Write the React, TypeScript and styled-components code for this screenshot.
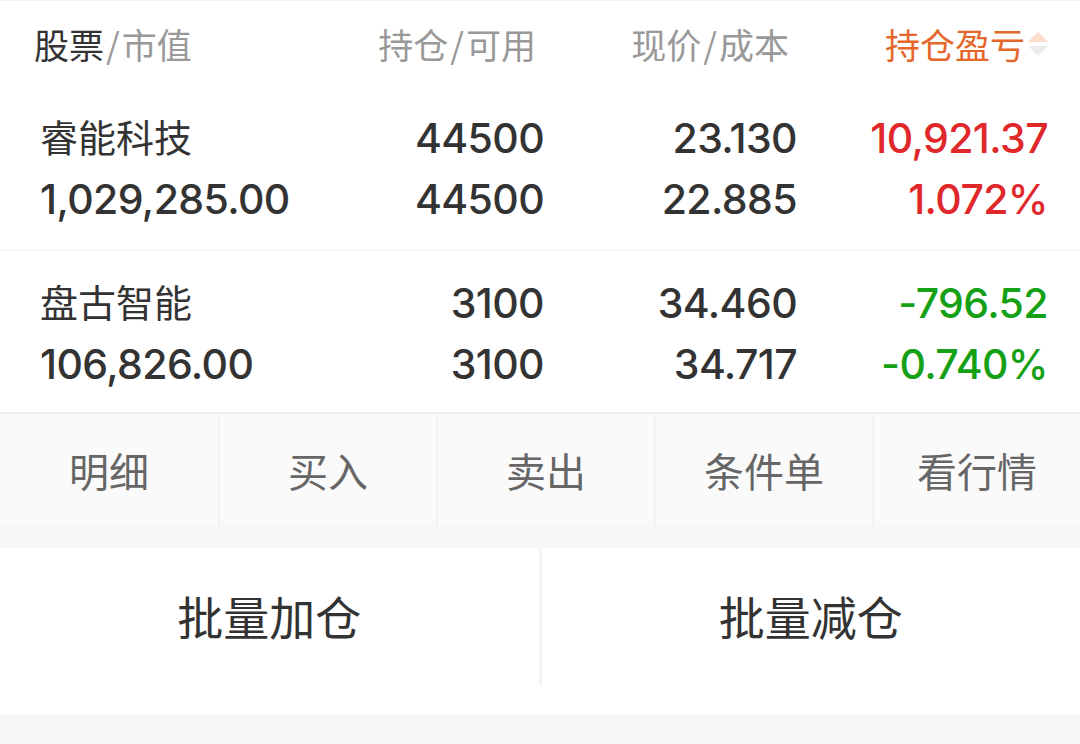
import styled, { createGlobalStyle } from "styled-components";

interface IPosition {
  name: string;
  marketValue: string;
  hold: string;
  available: string;
  price: string;
  cost: string;
  profit: string;
  profitRate: string;
  isUp: boolean;
}

const positions: IPosition[] = [
  {
    name: "睿能科技",
    marketValue: "1,029,285.00",
    hold: "44500",
    available: "44500",
    price: "23.130",
    cost: "22.885",
    profit: "10,921.37",
    profitRate: "1.072%",
    isUp: true,
  },
  {
    name: "盘古智能",
    marketValue: "106,826.00",
    hold: "3100",
    available: "3100",
    price: "34.460",
    cost: "34.717",
    profit: "-796.52",
    profitRate: "-0.740%",
    isUp: false,
  },
];

const actions = ["明细", "买入", "卖出", "条件单", "看行情"];

const GlobalStyle = createGlobalStyle`
  html, body {
    margin: 0;
    padding: 0;
    background: #f5f6f8;
  }
  body {
    font-family: "Noto Sans CJK SC", "Noto Sans", sans-serif;
    color: #333;
  }
`;

const Page = styled.div`
  width: 1080px;
  height: 744px;
  background: #f5f6f8;
  overflow: hidden;
`;

const Panel = styled.div`
  background: #fff;
  border-top: 1px solid #f2f3f5;
`;

const Grid = styled.div`
  display: grid;
  grid-template-columns: 1fr 250px 253px 251px;
  padding: 0 32px 0 40px;
`;

const HeaderRow = styled(Grid)`
  height: 85px;
  padding-bottom: 6px;
  align-items: center;
  font-size: 35px;
  color: #999;
`;

const HeadCell = styled.div<{ $right?: boolean }>`
  display: flex;
  align-items: center;
  justify-content: ${(p) => (p.$right ? "flex-end" : "flex-start")};
  padding-right: ${(p) => (p.$right ? "8px" : "0")};
  white-space: nowrap;
`;

const HeadFirst = styled(HeadCell)`
  margin-left: -6px;
`;

const Strong = styled.span`
  color: #333;
`;

const Slash = styled.span`
  margin: 0 2px;
`;

const SortTitle = styled.span`
  color: #e5672a;
`;

const SortIcon = styled.span`
  display: flex;
  flex-direction: column;
  gap: 4px;
  margin-left: 3px;
  margin-right: -8px;
`;

const Triangle = styled.span<{ $up?: boolean }>`
  width: 0;
  height: 0;
  border-left: 10px solid transparent;
  border-right: 10px solid transparent;
  ${(p) =>
    p.$up
      ? "border-bottom: 10px solid #fcdcca;"
      : "border-top: 10px solid #ededed;"}
`;

const StockRow = styled(Grid)<{ $last?: boolean }>`
  grid-template-rows: 60px 61px;
  align-items: center;
  padding-top: ${(p) => (p.$last ? "22px" : "16px")};
  padding-bottom: ${(p) => (p.$last ? "18px" : "21px")};
  border-bottom: 1px solid #f0f0f0;
`;

const Name = styled.div`
  font-size: 38px;
  color: #333;
  white-space: nowrap;
  margin-bottom: 6px;
`;

const Num = styled.div<{ $color?: string; $right?: boolean }>`
  font-family: "Inter", "Liberation Sans", sans-serif;
  font-size: 41px;
  font-weight: 500;
  letter-spacing: -0.6px;
  color: ${(p) => p.$color || "#333"};
  text-align: ${(p) => (p.$right ? "right" : "left")};
  white-space: nowrap;
`;

const ActionBar = styled.div`
  display: grid;
  grid-template-columns: repeat(4, 218px) 1fr;
  height: 112px;
  background: #fafafa;
  border-top: 1px solid #f0f0f0;
`;

const Action = styled.div`
  display: flex;
  align-items: center;
  justify-content: center;
  font-size: 40px;
  color: #666;
  & + & {
    border-left: 2px solid #f2f2f2;
  }
`;

const Gap = styled.div`
  height: 22px;
  background: #f5f6f8;
`;

const BatchPanel = styled.div`
  background: #fff;
  padding-bottom: 30px;
`;

const BatchBar = styled.div`
  display: flex;
  height: 137px;
`;

const BatchButton = styled.div`
  flex: 1;
  display: flex;
  align-items: center;
  justify-content: center;
  font-size: 46px;
  color: #333;
  padding-bottom: 4px;
  & + & {
    border-left: 3px solid #f4f4f4;
  }
`;

export default function App() {
  return (
    <Page>
      <GlobalStyle />
      <Panel>
        <HeaderRow>
          <HeadFirst>
            <Strong>股票</Strong>
            <Slash>/</Slash>市值
          </HeadFirst>
          <HeadCell $right>
            持仓<Slash>/</Slash>可用
          </HeadCell>
          <HeadCell $right>
            现价<Slash>/</Slash>成本
          </HeadCell>
          <HeadCell $right>
            <SortTitle>持仓盈亏</SortTitle>
            <SortIcon>
              <Triangle $up />
              <Triangle />
            </SortIcon>
          </HeadCell>
        </HeaderRow>
        {positions.map((p, i) => {
          const color = p.isUp ? "#e0282b" : "#15a015";
          return (
            <StockRow key={p.name} $last={i === positions.length - 1}>
              <Name>{p.name}</Name>
              <Num $right>{p.hold}</Num>
              <Num $right>{p.price}</Num>
              <Num $right $color={color}>
                {p.profit}
              </Num>
              <Num>{p.marketValue}</Num>
              <Num $right>{p.available}</Num>
              <Num $right>{p.cost}</Num>
              <Num $right $color={color}>
                {p.profitRate}
              </Num>
            </StockRow>
          );
        })}
        <ActionBar>
          {actions.map((a) => (
            <Action key={a}>{a}</Action>
          ))}
        </ActionBar>
      </Panel>
      <Gap />
      <BatchPanel>
        <BatchBar>
          <BatchButton>批量加仓</BatchButton>
          <BatchButton>批量减仓</BatchButton>
        </BatchBar>
      </BatchPanel>
    </Page>
  );
}
